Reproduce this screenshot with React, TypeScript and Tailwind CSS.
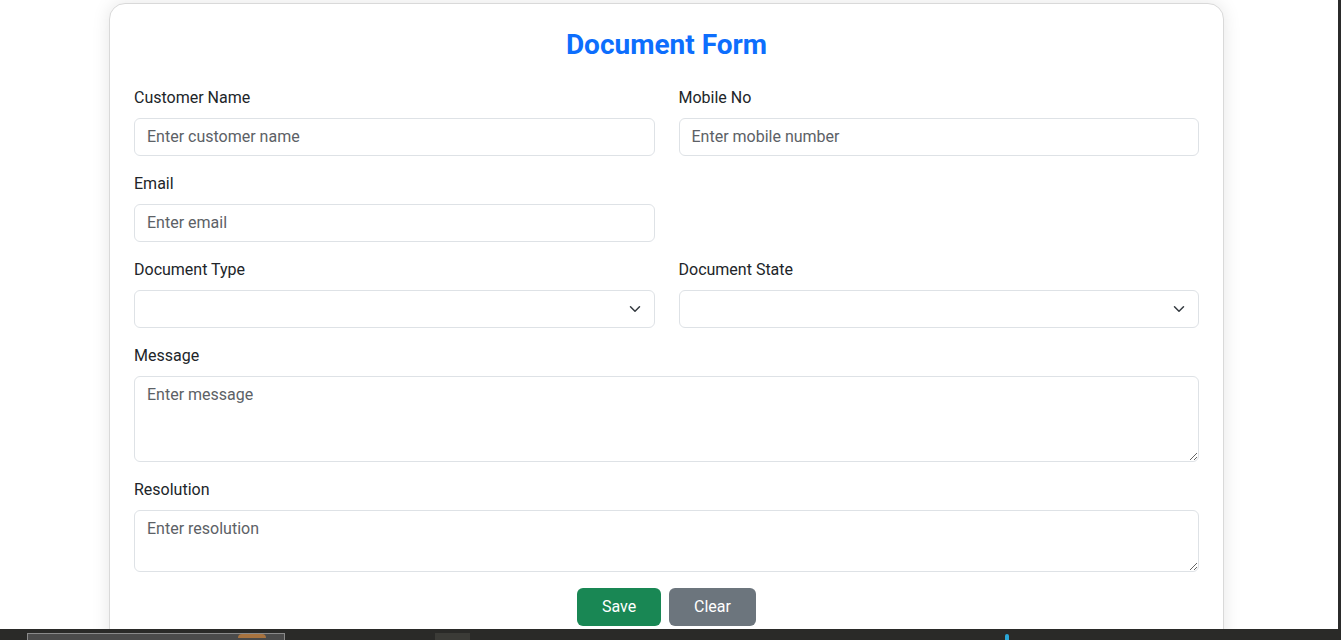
import type { ReactNode } from "react";

function Field({ label, children }: { label: string; children: ReactNode }) {
  return (
    <div className="mb-4">
      <label className="mb-2 block text-base leading-6 text-[#212529]">{label}</label>
      {children}
    </div>
  );
}

const inputCls =
  "block w-full rounded-md border border-[#dee2e6] bg-white px-3 py-1.5 text-base leading-6 text-[#212529] placeholder:text-[#5c6166] outline-none";

function Select() {
  return (
    <div className="relative">
      <select className={`${inputCls} h-[38px] appearance-none`} defaultValue="">
        <option value="" />
      </select>
      <svg
        className="pointer-events-none absolute right-3 top-1/2 -translate-y-1/2"
        width="16"
        height="12"
        viewBox="0 0 16 16"
        fill="none"
        stroke="#343a40"
        strokeWidth="2"
        strokeLinecap="round"
        strokeLinejoin="round"
      >
        <path d="m2 5 6 6 6-6" />
      </svg>
    </div>
  );
}

export default function App() {
  return (
    <div className="flex h-[640px] w-[1341px] flex-col overflow-hidden bg-white font-['Roboto',sans-serif]">
      <div className="flex h-[629px] overflow-hidden">
        <div className="flex-1 overflow-hidden pl-[109px] pr-[114px] pt-[3px]">
          <div className="rounded-2xl border border-[#d9d9d9] bg-white px-6 pt-6 pb-10 shadow-[0_0_18px_rgba(0,0,0,0.1)]">
            <h2 className="mb-6 text-center text-[28px] leading-[1.2] font-bold text-[#0d6efd]">
              Document Form
            </h2>
            <div className="grid grid-cols-2 gap-x-6">
              <Field label="Customer Name">
                <input className={inputCls} placeholder="Enter customer name" />
              </Field>
              <Field label="Mobile No">
                <input className={inputCls} placeholder="Enter mobile number" />
              </Field>
              <Field label="Email">
                <input className={inputCls} placeholder="Enter email" />
              </Field>
              <div />
              <Field label="Document Type">
                <Select />
              </Field>
              <Field label="Document State">
                <Select />
              </Field>
            </div>
            <Field label="Message">
              <textarea className={inputCls} rows={3} placeholder="Enter message" />
            </Field>
            <Field label="Resolution">
              <textarea className={inputCls} rows={2} placeholder="Enter resolution" />
            </Field>
            <div className="flex justify-center gap-2">
              <button className="h-[38px] w-[84px] rounded-md bg-[#198754] text-base text-white">
                Save
              </button>
              <button className="h-[38px] w-[87px] rounded-md bg-[#6c757d] text-base text-white">
                Clear
              </button>
            </div>
          </div>
        </div>
        <div className="w-[3px] bg-[#2b2b2b]" />
      </div>
      <div className="flex h-[11px] items-end bg-[#2a2a28] pl-[27px]">
        <div className="relative h-[7px] w-[258px] border-t border-l border-r border-[#8a8a8a] bg-[#4b4b4b]">
          <div className="absolute left-[210px] top-0 h-[4px] w-[28px] rounded-t-full bg-[#a8733f]" />
        </div>
        <div className="ml-[150px] h-[7px] w-[35px] bg-[#3b3b37]" />
        <div className="ml-[535px] h-[6px] w-[4px] rounded-t-full bg-[#2aa6d6]" />
      </div>
    </div>
  );
}
